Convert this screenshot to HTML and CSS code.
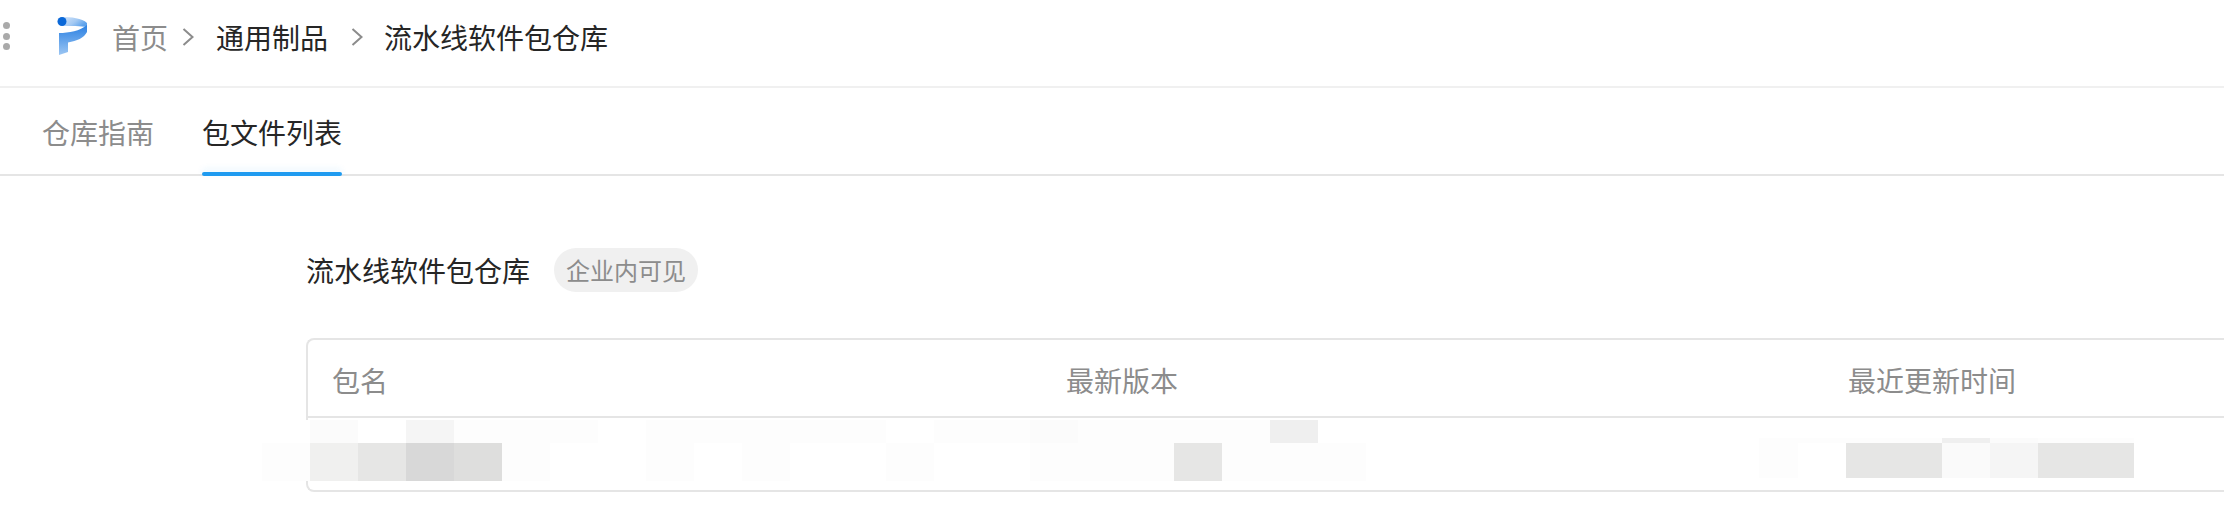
FILE: index.html
```html
<!DOCTYPE html>
<html lang="zh-CN">
<head>
  <meta charset="UTF-8" />
  <title>流水线软件包仓库</title>
  <link rel="stylesheet" href="styles.css">
</head>
<body>
  <!-- 顶部导航 -->
  <header class="topbar">
    <div class="grip"><i></i><i></i><i></i></div>
    <svg class="logo" width="30" height="38" viewBox="0 0 30 38">
      <defs>
        <linearGradient id="logo-arc" x1="0" y1="0" x2="1" y2="0.5">
          <stop offset="0" stop-color="#d5e5f9" />
          <stop offset="0.6" stop-color="#a3c9f3" />
          <stop offset="1" stop-color="#5ea3ec" />
        </linearGradient>
        <linearGradient id="logo-stem" x1="0" y1="0" x2="0" y2="1">
          <stop offset="0" stop-color="#2a80e2" />
          <stop offset="1" stop-color="#9cc6f3" />
        </linearGradient>
      </defs>
      <path d="M5 0C14 0 25 1 30 6L30 10C24 9 14 9 5 9Z" fill="url(#logo-arc)" />
      <path d="M2 16C12 16 23 14 30 8L30 15C27 21 20 24 11 25.5L11 35L2 38Z" fill="url(#logo-stem)" />
      <circle cx="5" cy="4.5" r="4.5" fill="#0a68d8" />
    </svg>
    <nav class="crumbs">
      <a class="crumb-home">首页</a>
      <svg class="chev" width="12" height="18" viewBox="0 0 12 18"><path d="M1.5 1L10.5 9L1.5 17" /></svg>
      <a class="crumb-mid">通用制品</a>
      <svg class="chev chev-wide" width="12" height="18" viewBox="0 0 12 18"><path d="M1.5 1L10.5 9L1.5 17" /></svg>
      <a>流水线软件包仓库</a>
    </nav>
  </header>

  <div class="tabs">
    <div class="tab">仓库指南</div>
    <div class="tab active">包文件列表</div>
  </div>

  <main class="content">
    <div class="repo-title">
      <h2>流水线软件包仓库</h2>
      <span class="badge">企业内可见</span>
    </div>

    <div class="pkg-table">
      <div class="pkg-head">
        <div class="col-name">包名</div>
        <div class="col-version">最新版本</div>
        <div>最近更新时间</div>
      </div>
      <div class="pkg-row">
        <!-- 打码区域 -->
        <div class="mosaic mosaic-left">
          <span class="gap"></span><span class="s1"></span><span class="gap"></span><span class="s3"></span>
          <span class="s0 w3"></span><span class="gap"></span><span class="s0 w5"></span><span class="gap"></span>
          <span class="s0 w2"></span><span class="s1"></span><span class="s0 w2"></span><span class="s0 w2"></span>
          <span class="s4"></span><span class="gap w2"></span>

          <span class="s0"></span><span class="s5"></span><span class="s6"></span><span class="s8"></span>
          <span class="s7"></span><span class="s0"></span><span class="gap w2"></span><span class="s0"></span>
          <span class="gap"></span><span class="s0"></span><span class="gap w2"></span><span class="s0"></span>
          <span class="gap w2"></span><span class="s0 w3"></span><span class="s6"></span><span class="s0 w3"></span>
        </div>
        <div class="mosaic mosaic-right">
          <span class="s0 w4"></span><span class="s4"></span><span class="s1"></span><span class="s0 w2"></span>
          <span class="s0"></span><span class="gap"></span><span class="s6 w2"></span><span class="s2"></span>
          <span class="s3"></span><span class="s6"></span><span class="s6"></span>
        </div>
      </div>
    </div>
  </main>
</body>
</html>
```

FILE: styles.css
```css
html, body {
  margin: 0;
  height: 100%;
  overflow: hidden;
}
body {
  font-family: "Noto Sans CJK SC", "Noto Sans", sans-serif;
  font-size: 28px;
  color: #262626;
  background-color: #fff;
}
.topbar {
  display: flex;
  align-items: center;
  height: 86px;
  border-bottom: 2px solid #f0f0f0;
}
.grip {
  display: flex;
  flex-direction: column;
  gap: 3.4px;
  margin-left: 3px;
  margin-top: -14px;
}
.grip i {
  display: block;
  width: 7px;
  height: 7px;
  border-radius: 50%;
  background-color: #aaa;
}
.logo {
  margin-left: 47px;
  margin-top: -14px;
}
.crumbs {
  display: flex;
  align-items: center;
  margin-left: 25px;
  line-height: 40px;
  margin-top: -12px;
}
.crumb-home {
  color: #8c8c8c;
}
.chev {
  margin-left: 14px;
}
.chev path {
  fill: none;
  stroke: #8c8c8c;
  stroke-width: 2;
}
.crumb-mid {
  margin-left: 22px;
}
.chev-wide {
  margin-left: 23px;
  margin-right: 21px;
}
.tabs {
  display: flex;
  gap: 48px;
  height: 86px;
  padding-left: 42px;
  border-bottom: 2px solid #e5e5e5;
}
.tab {
  position: relative;
  line-height: 88px;
  color: #8c8c8c;
}
.tab.active {
  color: #262626;
}
.tab.active::after {
  content: "";
  position: absolute;
  left: 0;
  right: 0;
  bottom: -2px;
  height: 4px;
  border-radius: 2px;
  background-color: #1f9bf0;
  box-shadow: 0 -3px 6px rgba(31, 155, 240, 0.1);
}
.content {
  padding: 72px 0 0 306px;
}
.repo-title {
  display: flex;
  align-items: center;
  gap: 24px;
}
.repo-title h2 {
  margin: 0;
  font-size: 28px;
  font-weight: 400;
  line-height: 44px;
}
.badge {
  padding: 0 12px;
  font-size: 24px;
  line-height: 44px;
  color: #8c8c8c;
  background-color: #f0f0f0;
  border-radius: 22px;
}
/* the table runs off the right of the screen, so no right border */
.pkg-table {
  margin-top: 46px;
  border: 2px solid #e5e5e5;
  border-right: none;
  border-radius: 8px 0 0 8px;
}
.pkg-head {
  display: flex;
  height: 76px;
  padding-left: 24px;
  line-height: 80px;
  color: #8c8c8c;
  border-bottom: 2px solid #e5e5e5;
}
.col-name {
  width: 734px;
}
.col-version {
  width: 782px;
}
.pkg-row {
  position: relative;
  height: 72px;
}
.mosaic {
  position: absolute;
  display: grid;
  grid-template-columns: repeat(24, 48px);
}
.mosaic-left {
  left: -46px;
  top: 2px;
  grid-template-rows: 23px 38px;
}
.mosaic-right {
  left: 1451px;
  top: 20px;
  grid-template-columns: 39px repeat(7, 48px);
  grid-template-rows: 5px 35px;
}
.w2 { grid-column: span 2; }
.w3 { grid-column: span 3; }
.w4 { grid-column: span 4; }
.w5 { grid-column: span 5; }
.gap { background-color: #fff; }
.s0 { background-color: #fdfdfd; }
.s1 { background-color: #fbfbfb; }
.s2 { background-color: #fafafa; }
.s3 { background-color: #f5f5f5; }
.s4 { background-color: #efefef; }
.s5 { background-color: #f0f0ef; }
.s6 { background-color: #e6e6e5; }
.s7 { background-color: #dededd; }
.s8 { background-color: #d8d8d8; }
```
